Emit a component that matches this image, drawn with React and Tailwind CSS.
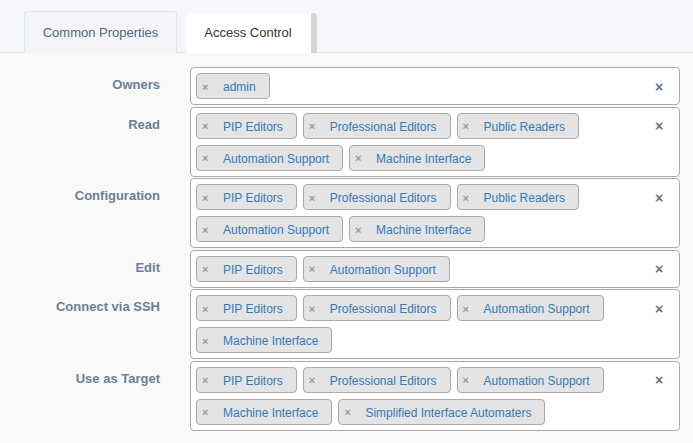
import React from 'react';

const rows = [
  { label: 'Owners', tags: ['admin'] },
  { label: 'Read', tags: ['PIP Editors', 'Professional Editors', 'Public Readers', 'Automation Support', 'Machine Interface'] },
  { label: 'Configuration', tags: ['PIP Editors', 'Professional Editors', 'Public Readers', 'Automation Support', 'Machine Interface'] },
  { label: 'Edit', tags: ['PIP Editors', 'Automation Support'] },
  { label: 'Connect via SSH', tags: ['PIP Editors', 'Professional Editors', 'Automation Support', 'Machine Interface'] },
  { label: 'Use as Target', tags: ['PIP Editors', 'Professional Editors', 'Automation Support', 'Machine Interface', 'Simplified Interface Automaters'] },
];

const Tag = ({ text }) => (
  <span className="flex items-center h-[26px] border border-[#aaaaaa] bg-[#e4e4e4] rounded-[4px] pl-[5px] pr-[13px] pt-[2px] text-[12px]">
    <span className="w-[21px] text-[#999999] font-bold text-[11px] leading-none">×</span>
    <span className="text-[#337ab7] leading-none">{text}</span>
  </span>
);

const App = () => {
  return (
    <div className="min-h-screen w-[693px] bg-[#f9f9f9] font-['Liberation_Sans',Arial,sans-serif]">
      {/* Tabs */}
      <div className="h-[53px] bg-[#f5f7fa] border-b border-[#e3e7ec] flex items-end pl-[24px] gap-[10px]">
        <div className="h-[42px] w-[153px] mb-[-1px] bg-[#f3f5f8] border border-b-0 border-[#e2e6eb] rounded-t-[4px] flex items-center justify-center text-[13px] text-[#4f6681]">
          Common Properties
        </div>
        <div className="h-[40px] w-[130px] mb-[-1px] bg-white rounded-t-[4px] border-r-[6px] border-[#d3d6da] flex items-center justify-center pr-[2px] text-[13px] text-[#333333]">
          Access Control
        </div>
      </div>

      {/* Permission rows */}
      <div className="pt-[14px] pr-[13px] flex flex-col gap-[1.6px]">
        {rows.map((row) => (
          <div key={row.label} className="grid grid-cols-[160px_1fr] gap-x-[30px]">
            <div className="text-right text-[13px] font-bold text-[#6c7f94] leading-[15px] pt-[10px]">
              {row.label}
            </div>
            <div className="flex items-start bg-white border border-[#aaaaaa] rounded-[4px] p-[5px]">
              <div className="flex-1 flex flex-wrap gap-x-[6px] gap-y-[6px]">
                {row.tags.map((t) => (
                  <Tag key={t} text={t} />
                ))}
              </div>
              <span className="w-[30px] h-[26px] pt-[2px] flex items-center justify-center text-[14px] font-bold text-[#60738a]">×</span>
            </div>
          </div>
        ))}
      </div>
    </div>
  );
};

export default App;
